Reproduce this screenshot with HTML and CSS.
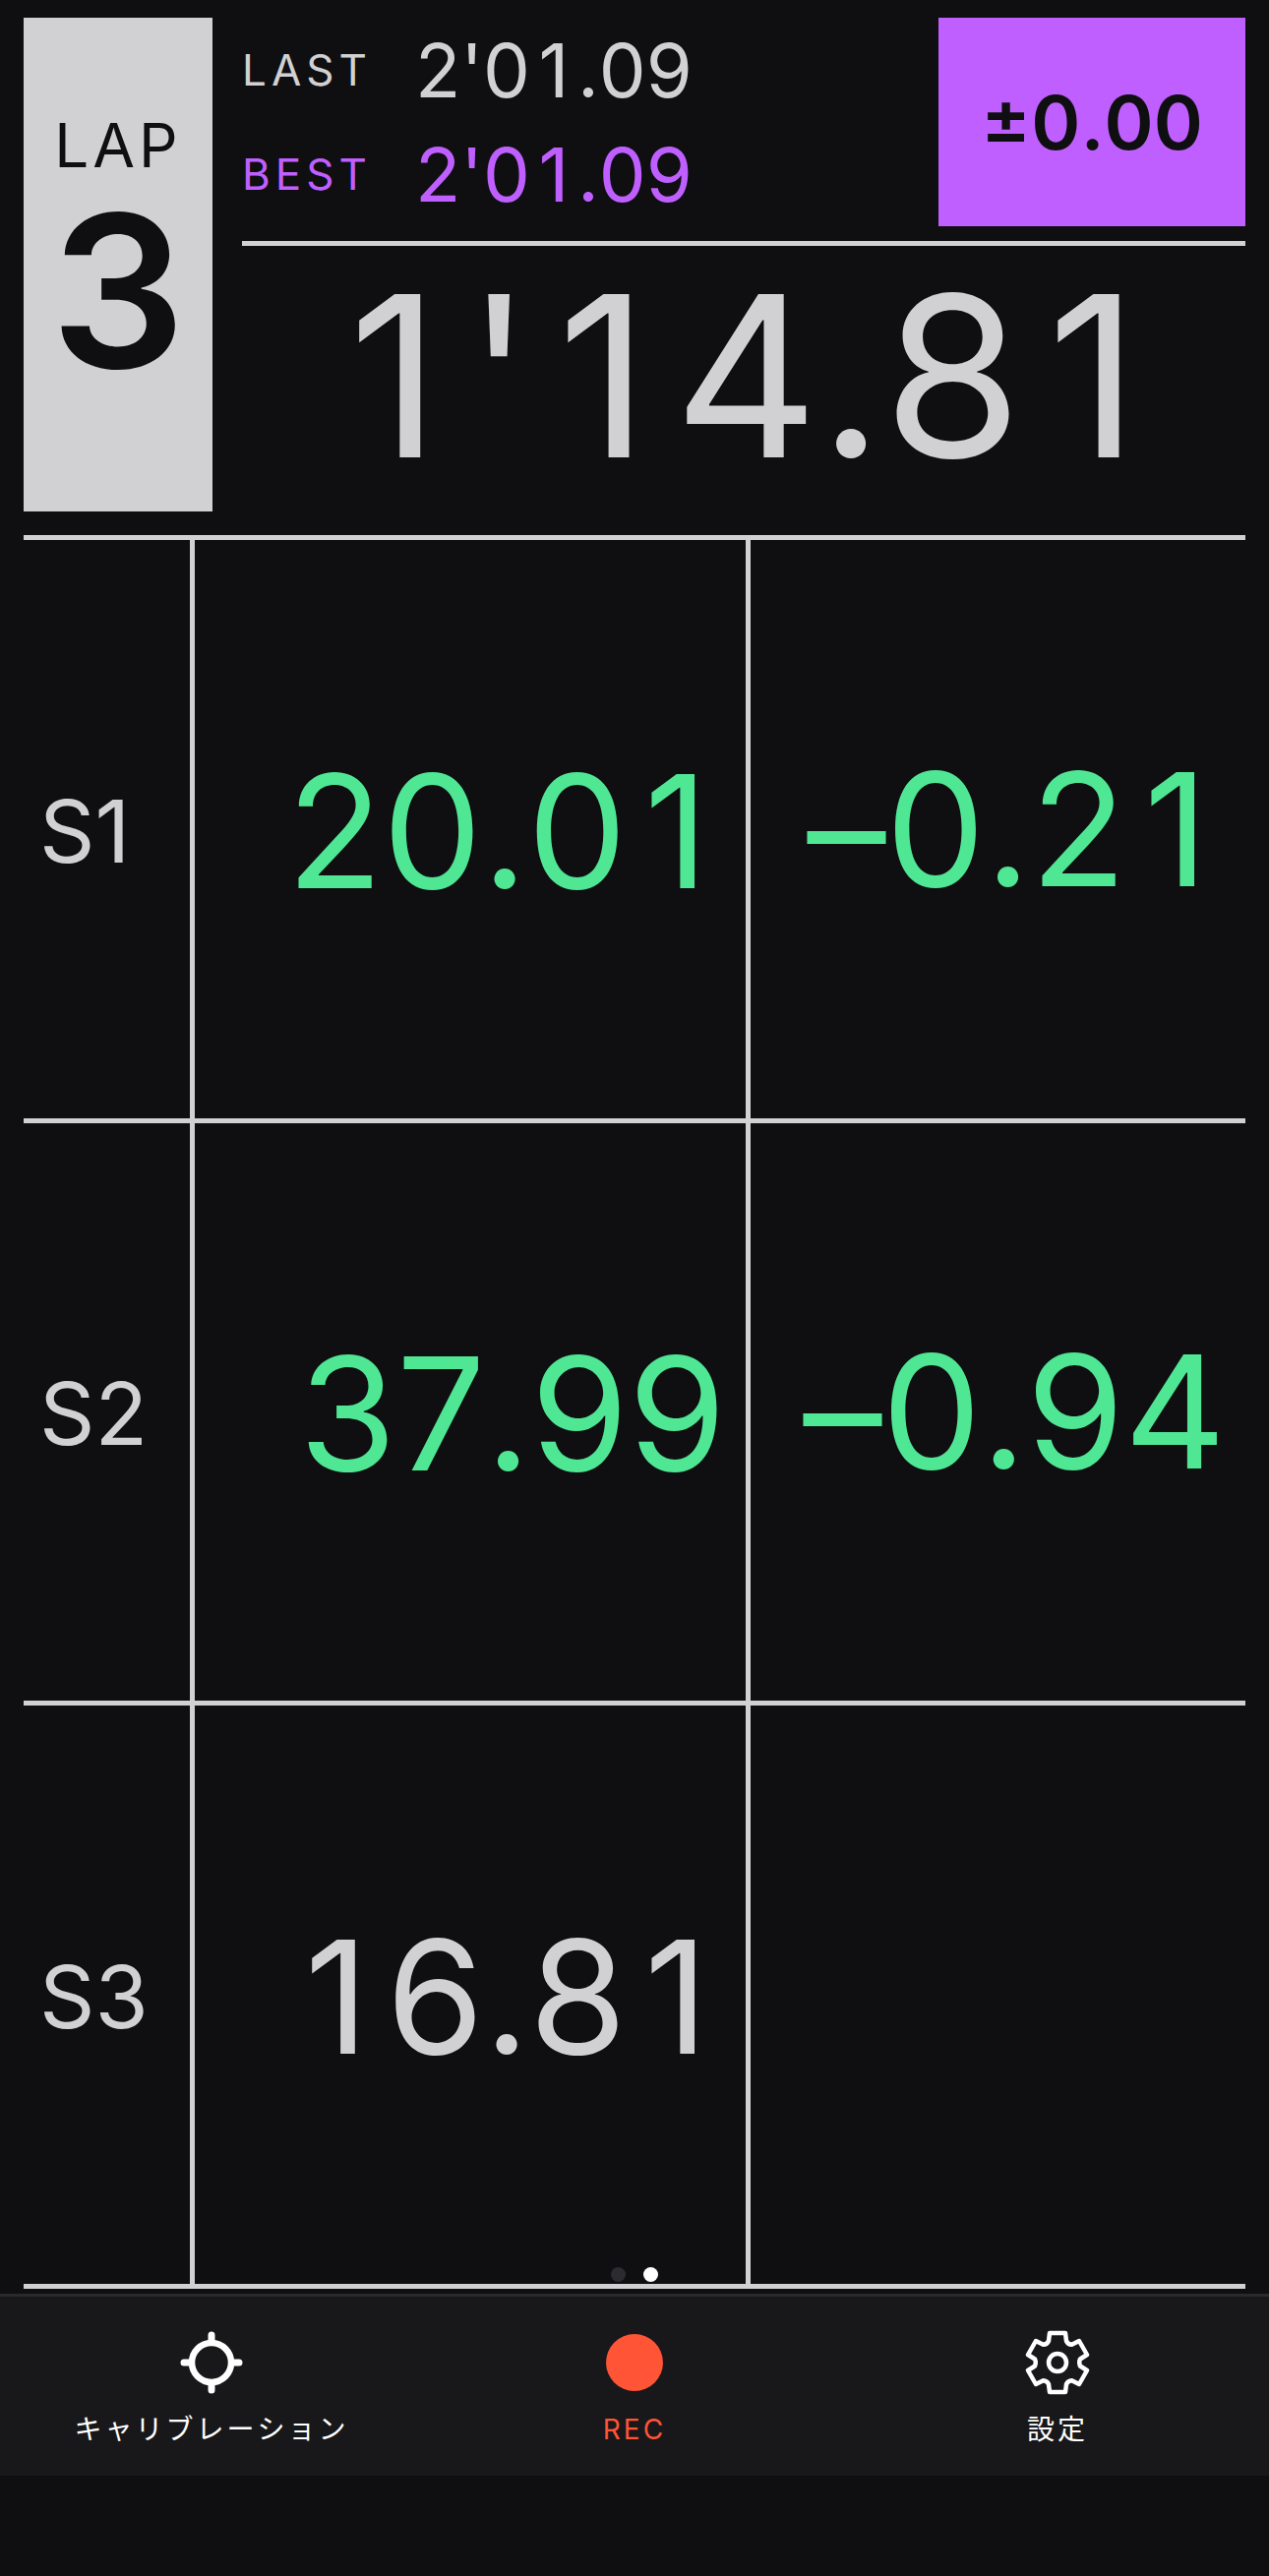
FILE: index.html
```html
<!DOCTYPE html>
<html lang="ja">

<head>
    <meta charset="UTF-8">
    <meta name="viewport" content="width=device-width, initial-scale=1.0">
    <title>Lap Timer</title>
    <link rel="stylesheet" href="styles.css">
</head>

<body>
    <main>
        <header class="summary">
            <div class="lap-box">
                <span class="lap-label">LAP</span>
                <strong class="lap-number">3</strong>
            </div>
            <div class="times">
                <div class="times-top">
                    <dl class="records">
                        <dt>LAST</dt>
                        <dd>2'0<span class="one">1</span>.09</dd>
                        <dt class="best">BEST</dt>
                        <dd class="best">2'0<span class="one">1</span>.09</dd>
                    </dl>
                    <div class="gap-box">±0.00</div>
                </div>
                <div class="current"><span class="one">1</span>'<span class="one">1</span>4.8<span class="one">1</span></div>
            </div>
        </header>

        <div class="sectors">
            <table>
                <tr>
                    <th scope="row">S1</th>
                    <td class="time faster">20.0<span class="one">1</span></td>
                    <td class="diff faster">–0.2<span class="one">1</span></td>
                </tr>
                <tr>
                    <th scope="row">S2</th>
                    <td class="time faster">37.99</td>
                    <td class="diff faster">–0.94</td>
                </tr>
                <tr>
                    <th scope="row">S3</th>
                    <td class="time"><span class="one">1</span>6.8<span class="one">1</span></td>
                    <td class="diff"></td>
                </tr>
            </table>
            <div class="pager">
                <button type="button" aria-label="1"></button>
                <button type="button" class="active" aria-label="2"></button>
            </div>
        </div>
    </main>

    <nav class="tab-bar">
        <a href="#calibration">
            <svg viewBox="-33 -33 66 66" fill="none" stroke="currentColor" stroke-linecap="round">
                <circle r="20" stroke-width="6.5" />
                <path d="M0-28V-22M0 22V28M-28 0H-22M22 0H28" stroke-width="7" />
            </svg>
            <span>キャリブレーション</span>
        </a>
        <a href="#rec" class="rec">
            <svg viewBox="-33 -33 66 66" fill="currentColor">
                <circle r="29" />
            </svg>
            <span>REC</span>
        </a>
        <a href="#settings">
            <svg viewBox="-33 -33 66 66" fill="none" stroke="currentColor" stroke-width="4.5" stroke-linejoin="round">
                <path d="M-8-30L8-30L9-22Q10.500-18.500 14.500-18.200L22-22L30-8L23-3.500Q21.500 0 23 3.500L30 8L22 22L14.500 18.200Q10.500 18.500 9 22L8 30L-8 30L-9 22Q-10.500 18.500-14.500 18.200L-22 22L-30 8L-23 3.500Q-21.500 0-23-3.500L-30-8L-22-22L-14.500-18.200Q-10.500-18.500-9-22Z" />
                <circle r="9" />
            </svg>
            <span>設定</span>
        </a>
    </nav>
</body>

</html>
```
FILE: styles.css
```css
* {
    box-sizing: border-box;
}

body {
    display: flex;
    flex-direction: column;
    height: 100vh;
    margin: 0;
    padding-bottom: 102px;
    background-color: #0f0f11;
    color: #d1d1d3;
    font-family: Inter, "Noto Sans CJK JP", sans-serif;
    font-kerning: none;
}

main {
    display: flex;
    flex: 1;
    flex-direction: column;
    gap: 24px;
    padding: 18px 24px 5px;
}

/* Gives the narrow 1 the same width as the other digits */
.one {
    display: inline-block;
    width: 1ch;
    text-align: center;
}

/* Lap summary */
.summary {
    display: flex;
    gap: 30px;
}

.lap-box {
    display: flex;
    flex-direction: column;
    align-items: center;
    width: 192px;
    padding-top: 92px;
    background-color: #d1d1d3;
    color: #0f0f11;
}

.lap-label {
    font-size: 62px;
    line-height: 76px;
    letter-spacing: 4px;
}

.lap-number {
    font-size: 216px;
    font-weight: 600;
    line-height: 220px;
}

.times {
    flex: 1;
}

.times-top {
    display: flex;
    justify-content: space-between;
    padding-bottom: 15px;
    border-bottom: 5px solid #d1d1d3;
}

.records {
    display: grid;
    grid-template-columns: auto auto;
    column-gap: 44px;
    align-items: center;
    margin: 0;
}

.records dt {
    font-size: 44px;
    letter-spacing: 5px;
}

.records dd {
    margin: 0;
    font-size: 76px;
    line-height: 106px;
}

.best {
    color: #bf5fff;
}

.gap-box {
    display: flex;
    align-items: center;
    justify-content: center;
    width: 312px;
    background-color: #bf5fff;
    color: #0f0f11;
    font-size: 76px;
    font-weight: 600;
}

.current {
    padding-bottom: 6px;
    font-size: 228px;
    line-height: 264px;
    text-align: center;
}

/* Sector times */
.sectors {
    position: relative;
    flex: 1;
}

.sectors table {
    width: 100%;
    height: 100%;
    table-layout: fixed;
    border-top: 5px solid #d1d1d3;
    border-spacing: 0;
}

th,
td {
    padding: 4px 20px 0 16px;
    border-bottom: 5px solid #d1d1d3;
}

th {
    width: 14%;
    border-right: 5px solid #d1d1d3;
    font-size: 88px;
    font-weight: 400;
    text-align: left;
}

td {
    font-size: 160px;
    text-align: right;
}

.time {
    border-right: 5px solid #d1d1d3;
}

.diff {
    width: 40.5%;
    padding-top: 0;
    font-feature-settings: "calt" 0;
}

.faster {
    color: #4fe694;
}

.pager {
    position: absolute;
    right: 0;
    bottom: 7px;
    left: 0;
    display: flex;
    justify-content: center;
    gap: 18px;
}

.pager button {
    width: 15px;
    height: 15px;
    padding: 0;
    border: none;
    border-radius: 50%;
    background-color: #2c2c30;
}

.pager .active {
    background-color: #fff;
}

/* Bottom navigation */
.tab-bar {
    display: flex;
    height: 185px;
    border-top: 3px solid #2a2a2c;
    background-color: #18181a;
}

.tab-bar a {
    display: flex;
    flex: 1;
    flex-direction: column;
    align-items: center;
    gap: 13px;
    padding-top: 34px;
    color: #fff;
    font-size: 28px;
    line-height: 44px;
    letter-spacing: 3px;
    text-decoration: none;
}

.tab-bar svg {
    width: 66px;
    height: 66px;
}

.tab-bar .rec {
    color: #ff5436;
}
```
